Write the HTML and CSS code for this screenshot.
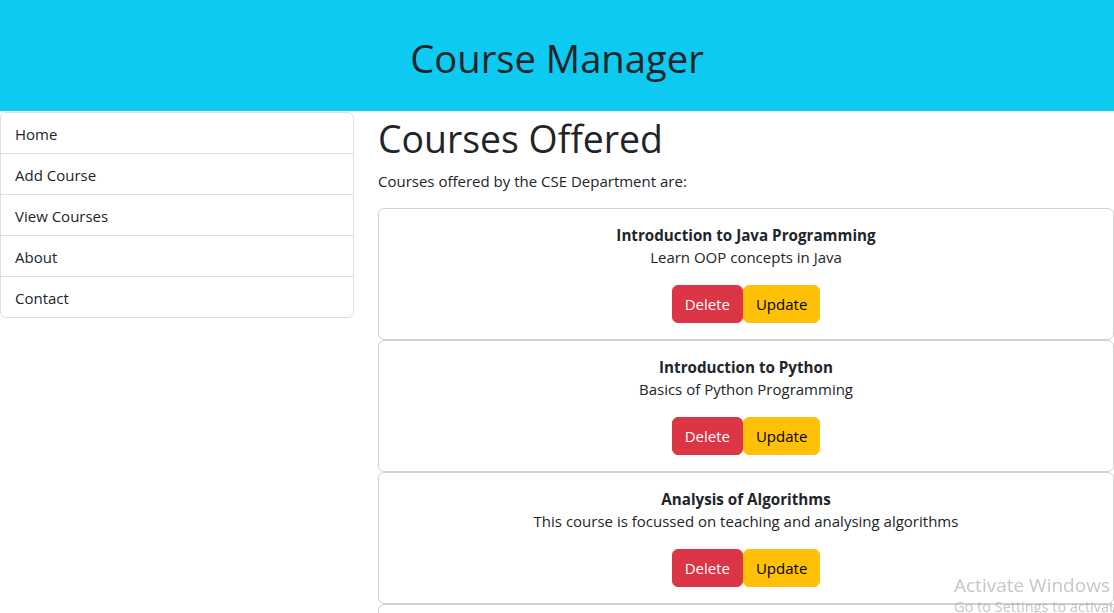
FILE: index.html
```html
<!DOCTYPE html>
<html lang="en">
<head>
<meta charset="utf-8">
<title>Course Manager</title>
<link rel="stylesheet" href="styles.css">
</head>
<body>
<header class="app-header">
  <h1 class="app-title">Course Manager</h1>
</header>
<div class="layout">
  <nav class="side-menu">
    <a class="menu-item" href="#">Home</a>
    <a class="menu-item" href="#">Add Course</a>
    <a class="menu-item" href="#">View Courses</a>
    <a class="menu-item" href="#">About</a>
    <a class="menu-item" href="#">Contact</a>
  </nav>
  <main class="content">
    <h1 class="page-title">Courses Offered</h1>
    <p class="lead-text">Courses offered by the CSE Department are:</p>
    <div class="course-list">
      <div class="course-card">
        <div class="course-title">Introduction to Java Programming</div>
        <p class="course-desc">Learn OOP concepts in Java</p>
        <div class="course-actions">
          <button class="btn btn-danger">Delete</button><button class="btn btn-warning">Update</button>
        </div>
      </div>
      <div class="course-card">
        <div class="course-title">Introduction to Python</div>
        <p class="course-desc">Basics of Python Programming</p>
        <div class="course-actions">
          <button class="btn btn-danger">Delete</button><button class="btn btn-warning">Update</button>
        </div>
      </div>
      <div class="course-card">
        <div class="course-title">Analysis of Algorithms</div>
        <p class="course-desc">This course is focussed on teaching and analysing algorithms</p>
        <div class="course-actions">
          <button class="btn btn-danger">Delete</button><button class="btn btn-warning">Update</button>
        </div>
      </div>
      <div class="course-card course-card-edge"></div>
    </div>
  </main>
</div>
<div class="watermark">
  <div class="wm-title">Activate Windows</div>
  <div class="wm-sub">Go to Settings to activate Windows.</div>
</div>
</body>
</html>
```
FILE: styles.css
```css
* { box-sizing: border-box; }
html, body { margin: 0; padding: 0; }
body {
  font-family: "Segoe UI", "Open Sans", "Noto Sans", sans-serif;
  font-size: 15px;
  line-height: 24px;
  color: #212529;
  background: #fff;
  overflow: hidden;
}
.app-header {
  background: #0dcaf0;
  height: 111px;
  display: flex;
  align-items: center;
  justify-content: center;
}
.app-title {
  margin: 0;
  font-size: 38.2px;
  font-weight: 400;
  line-height: 1.2;
  padding-top: 6px;
}
.layout {
  display: grid;
  grid-template-columns: 354px 1fr;
  column-gap: 24px;
  align-items: start;
}
.side-menu {
  display: flex;
  flex-direction: column;
  border: 1px solid rgba(0,0,0,.125);
  border-radius: 6px;
  margin-top: 1px;
}
.menu-item {
  display: block;
  padding: 9px 16px 7px 14px;
  color: #212529;
  text-decoration: none;
  border-top: 1px solid rgba(0,0,0,.125);
}
.menu-item:first-child { border-top: 0; }
.content { padding-top: 5px; }
.page-title {
  margin: 0 0 7px;
  font-size: 37.4px;
  font-weight: 400;
  line-height: 46px;
}
.lead-text { margin: 0 0 15px; }
.course-card {
  border: 1px solid rgba(0,0,0,.18);
  border-radius: 6px;
  padding: 16px;
  text-align: center;
}
.course-card-edge { height: 40px; }
.course-title {
  font-weight: 700;
  font-size: 15.2px;
  line-height: 20px;
}
.course-desc { margin: 0 0 16px; }
.course-actions { display: flex; justify-content: center; }
.btn {
  font-family: inherit;
  font-size: 15px;
  line-height: 24px;
  padding: 6px 12px;
  border: 1px solid transparent;
  border-radius: 6px;
  cursor: pointer;
}
.btn-danger { background: #dc3545; border-color: #dc3545; color: #fff; }
.btn-warning { background: #ffc107; border-color: #ffc107; color: #000; }
.watermark {
  position: fixed;
  left: 954px;
  top: 572px;
  color: rgba(160,160,160,.6);
  white-space: nowrap;
  pointer-events: none;
}
.wm-title { font-size: 19px; line-height: 26px; }
.wm-sub { font-size: 14.5px; line-height: 18px; }
```
